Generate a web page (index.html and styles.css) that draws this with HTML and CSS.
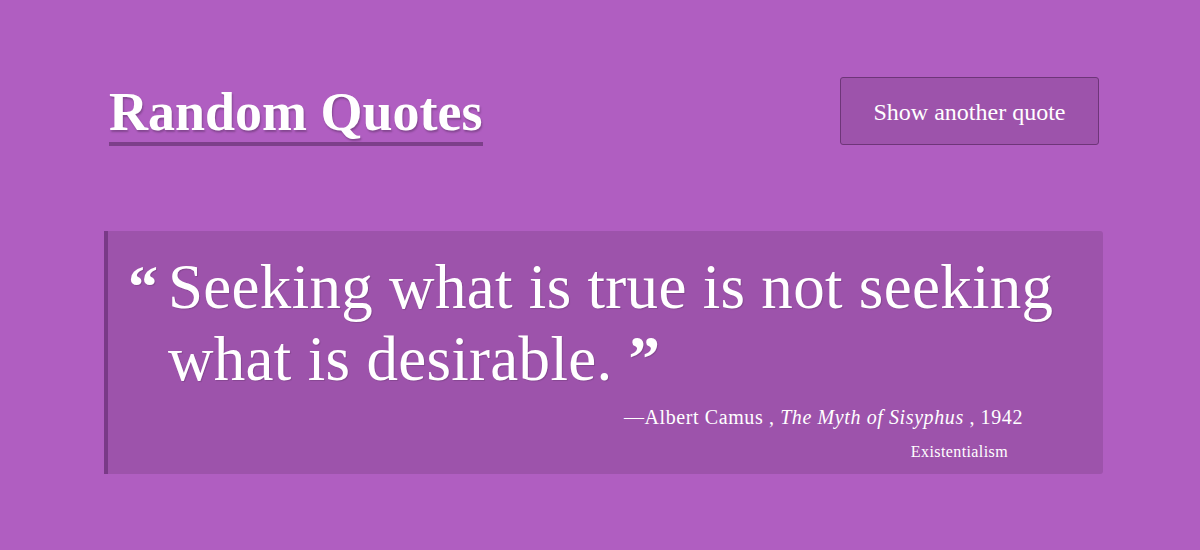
FILE: index.html
```html
<!DOCTYPE html>
<html>
<head>
<meta charset="utf-8">
<link rel="stylesheet" href="styles.css">
</head>
<body>
<div class="page">
  <header class="header">
    <h1 class="title">Random Quotes</h1>
    <button class="btn">Show another quote</button>
  </header>
  <blockquote class="card">
    <p class="quote"><span class="mark open">&#8220;</span>Seeking what is true is not seeking what is desirable. <b class="close">&#8221;</b></p>
    <p class="cite">&mdash;Albert Camus , <em>The Myth of Sisyphus</em> , 1942</p>
    <p class="tag">Existentialism</p>
  </blockquote>
</div>
</body>
</html>
```
FILE: styles.css
```css
html, body {
  margin: 0;
  padding: 0;
  background: #b05ec1;
  font-family: "Liberation Serif", "DejaVu Serif", serif;
  color: #fff;
}
.page {
  width: 1000px;
  margin: 0 auto;
  padding-top: 77px;
}
.header {
  display: flex;
  justify-content: space-between;
  align-items: flex-start;
  padding: 0 1px 0 9px;
}
.title {
  margin: 0;
  font-size: 54px;
  font-weight: bold;
  line-height: 60px;
  padding-top: 5px;
  border-bottom: 4px solid #7d3f8a;
  text-shadow: 1px 2px 2px rgba(0,0,0,0.25);
}
.btn {
  width: 259px;
  height: 68px;
  background: #9d53ab;
  border: 1px solid #6e3579;
  border-radius: 3px;
  color: #fff;
  font-family: inherit;
  font-size: 24px;
  padding: 2px 0 0;
}
.card {
  margin: 85px 0 0 4px;
  width: 999px;
  box-sizing: border-box;
  background: #9d53ab;
  border-left: 4px solid #793a87;
  border-radius: 0 3px 3px 0;
  padding: 20px 30px 13px 60px;
}
.quote {
  margin: 0;
  font-size: 63px;
  line-height: 72px;
  letter-spacing: 0.3px;
  position: relative;
  text-shadow: 1px 1px 1px rgba(0,0,0,0.15);
}
.mark {
  font-weight: bold;
}
.close {
  line-height: 1;
}
.open {
  position: absolute;
  left: -40px;
  top: 0;
  font-size: 60px;
}
.cite {
  margin: 11px 50px 0 0;
  text-align: right;
  font-size: 20px;
  letter-spacing: 0.6px;
}
.tag {
  margin: 14px 65px 0 0;
  text-align: right;
  font-size: 16px;
  letter-spacing: 0.4px;
}
```
